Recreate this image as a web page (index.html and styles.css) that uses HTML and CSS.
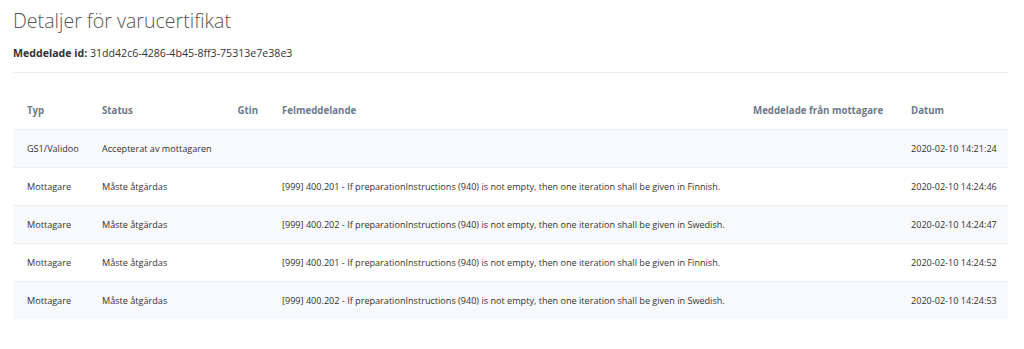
FILE: index.html
```html
<!DOCTYPE html>
<html lang="sv">
<head>
  <meta charset="UTF-8" />
  <title>Detaljer för varucertifikat</title>
  <link rel="stylesheet" href="styles.css">
</head>
<body>

  <main class="details">
    <h1>Detaljer för varucertifikat</h1>
    <p class="message-id"><strong>Meddelade id:</strong> 31dd42c6-4286-4b45-8ff3-75313e7e38e3</p>

    <!-- Historik -->
    <section class="history">
      <table>
        <thead>
          <tr>
            <th class="col-typ">Typ</th>
            <th class="col-status">Status</th>
            <th class="col-gtin">Gtin</th>
            <th class="col-fel">Felmeddelande</th>
            <th class="col-msg">Meddelade från mottagare</th>
            <th class="col-datum">Datum</th>
          </tr>
        </thead>
        <tbody>
          <tr>
            <td>GS1/Validoo</td>
            <td>Accepterat av mottagaren</td>
            <td></td>
            <td></td>
            <td></td>
            <td>2020-02-10 14:21:24</td>
          </tr>
          <tr>
            <td>Mottagare</td>
            <td>Måste åtgärdas</td>
            <td></td>
            <td>[999] 400.201 - If preparationInstructions (940) is not empty, then one iteration shall be given in Finnish.</td>
            <td></td>
            <td>2020-02-10 14:24:46</td>
          </tr>
          <tr>
            <td>Mottagare</td>
            <td>Måste åtgärdas</td>
            <td></td>
            <td>[999] 400.202 - If preparationInstructions (940) is not empty, then one iteration shall be given in Swedish.</td>
            <td></td>
            <td>2020-02-10 14:24:47</td>
          </tr>
          <tr>
            <td>Mottagare</td>
            <td>Måste åtgärdas</td>
            <td></td>
            <td>[999] 400.201 - If preparationInstructions (940) is not empty, then one iteration shall be given in Finnish.</td>
            <td></td>
            <td>2020-02-10 14:24:52</td>
          </tr>
          <tr>
            <td>Mottagare</td>
            <td>Måste åtgärdas</td>
            <td></td>
            <td>[999] 400.202 - If preparationInstructions (940) is not empty, then one iteration shall be given in Swedish.</td>
            <td></td>
            <td>2020-02-10 14:24:53</td>
          </tr>
        </tbody>
      </table>
    </section>
  </main>

</body>
</html>
```

FILE: styles.css
```css
:root {
  --color-text: #333;
  --color-head: #6d798b;
  --color-line: #eceef1;
  --color-stripe: #f8f9fa;
}

* {
  box-sizing: border-box;
  margin: 0;
  padding: 0;
}
body {
  background: #fff;
  font-family: 'Open Sans', sans-serif;
  color: var(--color-text);
}

.details {
  padding: 8px 16px 0 13px;
}
.details h1 {
  font-weight: 300;
  font-size: 19.6px;
  color: #555;
  line-height: 26px;
}
.message-id {
  margin-top: 12px;
  font-size: 10.6px;
  line-height: 14px;
  padding-bottom: 12px;
  border-bottom: 1px solid var(--color-line);
}
.message-id strong {
  font-weight: 700;
}

/* Tabell */
.history {
  margin-top: 19px;
}
.history table {
  width: 100%;
  table-layout: fixed;
  border-collapse: collapse;
  font-size: 9.1px;
}
.history th,
.history td {
  text-align: left;
  padding: 0 14px;
  height: 38px;
  white-space: nowrap;
}
.history th {
  font-size: 9.7px;
  font-weight: 700;
  color: var(--color-head);
  height: 37px;
}
.history td {
  border-top: 1px solid var(--color-line);
}
.history tbody tr:nth-child(odd) {
  background: var(--color-stripe);
}
.history .col-typ { width: 75px; }
.history .col-status { width: 135px; }
.history .col-gtin { width: 45px; text-align: right; padding-right: 10px; }
.history .col-fel { width: 471px; }
.history .col-msg { width: 158px; }
.history .col-datum { width: 111px; }
```
